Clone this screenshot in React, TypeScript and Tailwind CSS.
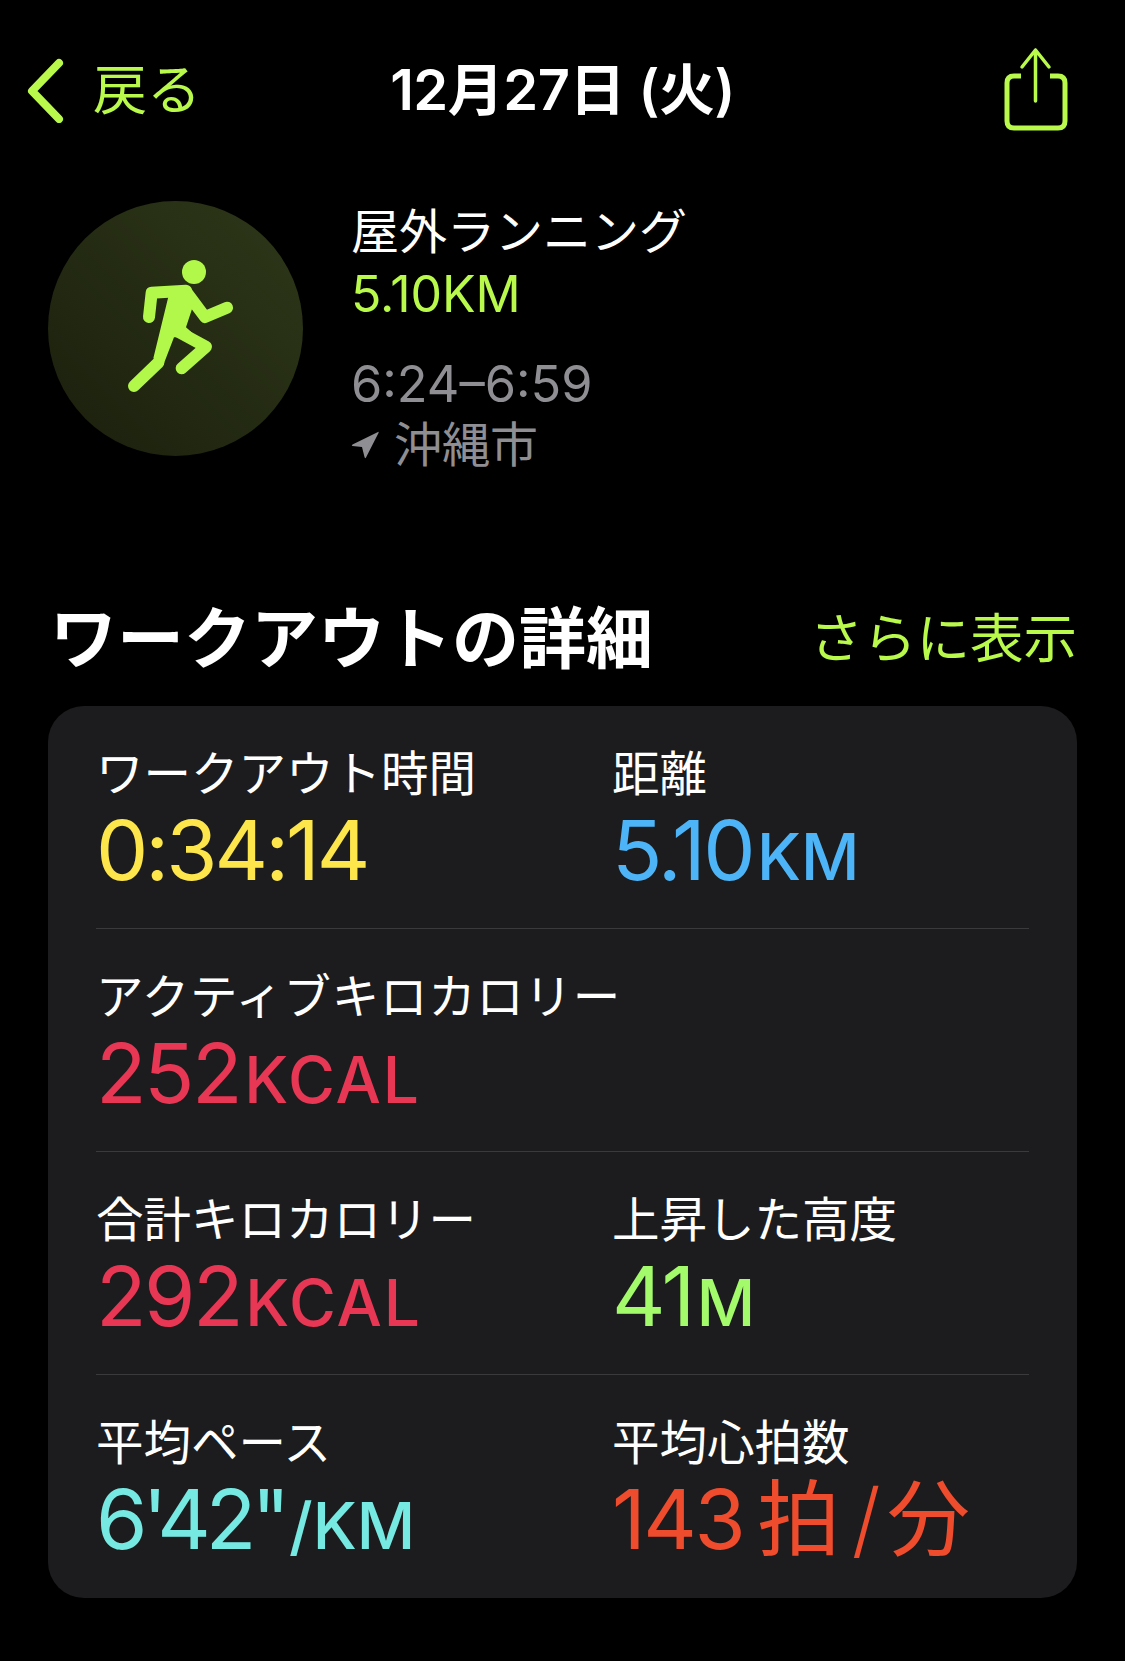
import type { ReactNode } from "react";

function Chevron() {
  return (
    <svg width="40" height="66" viewBox="0 0 40 66" fill="none" className="shrink-0">
      <path d="M33 6 L6 34 L33 62" stroke="#b9f94b" strokeWidth="8" strokeLinecap="round" strokeLinejoin="round" />
    </svg>
  );
}

function ShareIcon() {
  return (
    <svg width="64" height="86" viewBox="0 0 64 86" fill="none">
      <path
        d="M17 29 H10 Q3 29 3 36 V74 Q3 81 10 81 H54 Q61 81 61 74 V36 Q61 29 54 29 H46"
        stroke="#b9f94b"
        strokeWidth="5"
      />
      <path d="M31.5 54 V3 M18 20 L31.5 3 L45 20" stroke="#b9f94b" strokeWidth="3.5" strokeLinecap="round" strokeLinejoin="round" />
    </svg>
  );
}

function RunnerBadge() {
  return (
    <div className="h-[255px] w-[255px] shrink-0 rounded-full bg-linear-to-tr from-[#1b1f0d] to-[#2e3819]">
      <svg width="255" height="255" viewBox="54 33 765 765" fill="none">
        <circle cx="492" cy="246" r="36" fill="#b2f84a" />
        <g stroke="#b2f84a" strokeWidth="36" strokeLinecap="round" strokeLinejoin="round">
          <path d="M357 381 L365 308 L468 302" />
          <path d="M468 305 L525 381 L591 353" />
          <path d="M445 425 L528 470 L455 535" />
          <path d="M385 518 L312 588" />
        </g>
        <path d="M420 300 L480 298 L490 345 L468 412 L500 440 L432 442 L400 525 L370 505 Z" fill="#b2f84a" />
      </svg>
    </div>
  );
}

function Metric({
  label,
  labelTracking = "tracking-normal",
  children,
  color,
  tracking = "tracking-[-2.5px]",
}: {
  label: string;
  labelTracking?: string;
  children: ReactNode;
  color: string;
  tracking?: string;
}) {
  return (
    <div>
      <div className={`text-[47.5px] leading-[56px] whitespace-nowrap text-white ${labelTracking}`}>{label}</div>
      <div className={`mt-[4px] flex items-baseline text-[83px] leading-[88px] whitespace-pre ${tracking} ${color}`}>
        {children}
      </div>
    </div>
  );
}

function Unit({ children, wide }: { children: ReactNode; wide?: boolean }) {
  return (
    <span className={`ml-[4px] text-[64px] font-medium ${wide ? "tracking-[2px]" : "tracking-normal"}`}>{children}</span>
  );
}

function Row({ children, last }: { children: ReactNode; last?: boolean }) {
  return (
    <div className={`mx-[48px] h-[223px] pt-[40px] ${last ? "" : "border-b border-[#3a3a3c]"}`}>
      <div className="grid grid-cols-[516px_1fr]">{children}</div>
    </div>
  );
}

export default function App() {
  return (
    <div className="h-[1661px] w-[1125px] overflow-hidden bg-black pt-[44px] font-['Inter','Noto_Sans_CJK_JP',sans-serif]">
      <header className="grid h-[92px] grid-cols-[1fr_auto_1fr] items-center">
        <div className="flex items-center pl-[26px] text-[54px] text-[#b9f94b]">
          <Chevron />
          <span className="ml-[27px]">戻る</span>
        </div>
        <h1 className="text-[56px] font-semibold tracking-[-0.5px] text-white">12月27日 (火)</h1>
        <div className="flex justify-end pr-[57px]">
          <ShareIcon />
        </div>
      </header>

      <section className="mt-[65px] flex pl-[48px]">
        <RunnerBadge />
        <div className="ml-[48px] leading-[62px]">
          <div className="text-[48px] text-white">屋外ランニング</div>
          <div className="text-[50px] text-[#b9f94b]">5.10KM</div>
          <div className="mt-[28px] text-[50.5px] text-[#8e8e93]">6:24–6:59</div>
          <div className="flex items-center text-[48px] leading-[60px] text-[#8e8e93]">
            <svg width="28" height="28" viewBox="0 0 28 28" className="mr-[15px]">
              <path d="M27 1 Q28 0 27.5 2 L15 26.5 Q14 28 13.5 26 L11 16 L1.5 15 Q0 14.5 1.5 13.5 Z" fill="#8e8e93" />
            </svg>
            沖縄市
          </div>
        </div>
      </section>

      <section className="mt-[128px] flex h-[73px] items-center justify-between pr-[48px] pl-[50px]">
        <h2 className="text-[67px] font-bold text-white">ワークアウトの詳細</h2>
        <span className="text-[53.5px] text-[#b9f94b]">さらに表示</span>
      </section>

      <section className="mx-[48px] mt-[30px] h-[892px] rounded-[36px] bg-[#1c1c1e]">
        <Row>
          <Metric label="ワークアウト時間" color="text-[#fde64b]" tracking="tracking-[-3px]">
            0:34:14
          </Metric>
          <Metric label="距離" color="text-[#4cb4f7]">
            5.10<Unit>KM</Unit>
          </Metric>
        </Row>
        <Row>
          <Metric label="アクティブキロカロリー" labelTracking="tracking-[0.7px]" color="text-[#e83655]">
            252<Unit wide>KCAL</Unit>
          </Metric>
        </Row>
        <Row>
          <Metric label="合計キロカロリー" color="text-[#e83655]">
            292<Unit wide>KCAL</Unit>
          </Metric>
          <Metric label="上昇した高度" color="text-[#a3fa6b]">
            41<Unit>M</Unit>
          </Metric>
        </Row>
        <Row last>
          <Metric label="平均ペース" color="text-[#77e9e3]" tracking="tracking-[-5px]">
            6'42"<Unit>/KM</Unit>
          </Metric>
          <Metric label="平均心拍数" color="text-[#ee4c2c]">
            143<span className="ml-[14px]">拍</span>
            <span className="ml-[14px] font-light">/</span>
            <span className="ml-[9px]">分</span>
          </Metric>
        </Row>
      </section>
    </div>
  );
}
